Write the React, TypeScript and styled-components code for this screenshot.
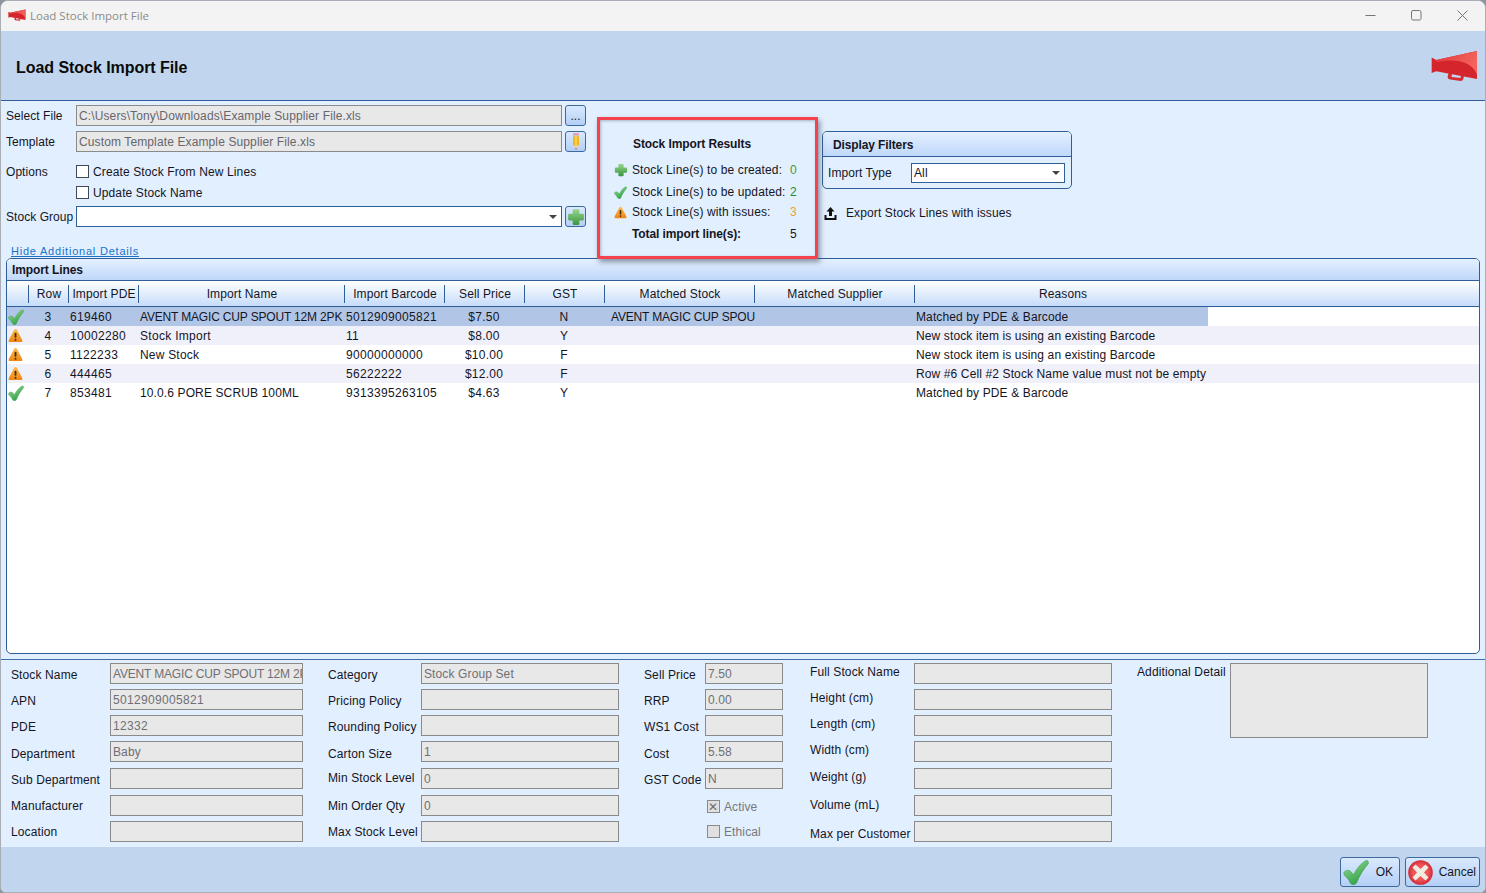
import React from 'react'
import styled, { createGlobalStyle } from 'styled-components'

const GlobalStyle = createGlobalStyle`
  html, body { margin: 0; padding: 0; background: #8e949c; }
  body { font-family: "Liberation Sans", Arial, sans-serif; font-size: 12px; letter-spacing: 0.12px; color: #15151f; }
  * { box-sizing: border-box; }
`

/* ---------- drawings ---------- */

function Megaphone({ width, height }: { width: number; height: number }) {
  return (
    <svg width={width} height={height} viewBox="424 150 142 96">
      <defs>
        <linearGradient id="hornShine" x1="0" y1="0" x2="1" y2="0.4">
          <stop offset="0" stopColor="#e2383c" />
          <stop offset="1" stopColor="#f4645c" />
        </linearGradient>
      </defs>
      <path d="M478 216 L474 232 Q474 238 482 239 L514 243 Q521 243 522 236 L524 226 L515 225 L513 234 L486 231 L488 218 Z" fill="#d42a30" />
      <path d="M426 172 L440 180 L563 153 L563 237 L440 214 L426 219 Z" fill="#d5252c" />
      <path d="M440 180 L563 153 L563 225 C552 190 510 172 440 186 Z" fill="url(#hornShine)" />
    </svg>
  )
}

function CheckIcon({ size = 16, id }: { size?: number; id: string }) {
  return (
    <svg width={size} height={size} viewBox="0 0 24 24">
      <defs>
        <linearGradient id={id} x1="0" y1="0" x2="0.6" y2="1">
          <stop offset="0" stopColor="#9ade98" />
          <stop offset="1" stopColor="#2f9e44" />
        </linearGradient>
      </defs>
      <path d="M0.8 12.5 C2.5 9.8 6 10 7.6 12 L9.6 14.6 C12.5 9 16.5 4 21 1.5 C23 1 24 2.5 23.2 4.5 C18.5 10 15 16 12.6 22 C11.5 24 8 24.3 6.8 22.3 C5.5 19 3 16.5 1 14.8 Z" fill={`url(#${id})`} stroke="#3a9a4a" strokeWidth="0.5" />
    </svg>
  )
}

function WarnIcon({ size = 15, id }: { size?: number; id: string }) {
  return (
    <svg width={size} height={size} viewBox="0 0 16 16">
      <defs>
        <linearGradient id={id} x1="0" y1="0" x2="0" y2="1">
          <stop offset="0" stopColor="#fbbf4e" />
          <stop offset="1" stopColor="#f08412" />
        </linearGradient>
      </defs>
      <path d="M8 1 Q9 1 9.6 2.2 L15.3 13 Q15.8 15 14 15 L2 15 Q0.2 15 0.7 13 L6.4 2.2 Q7 1 8 1 Z" fill={`url(#${id})`} />
      <rect x="7" y="5" width="2" height="5.5" rx="0.8" fill="#4a2c08" />
      <rect x="7" y="11.5" width="2" height="2" rx="0.8" fill="#4a2c08" />
    </svg>
  )
}

function PlusIcon({ size = 14, id }: { size?: number; id: string }) {
  return (
    <svg width={size} height={size} viewBox="0 0 16 16">
      <defs>
        <linearGradient id={id} x1="0" y1="0" x2="0" y2="1">
          <stop offset="0" stopColor="#98d68c" />
          <stop offset="1" stopColor="#3b9440" />
        </linearGradient>
      </defs>
      <path d="M6 1 H10 Q11 1 11 2 V5 H14 Q15 5 15 6 V10 Q15 11 14 11 H11 V14 Q11 15 10 15 H6 Q5 15 5 14 V11 H2 Q1 11 1 10 V6 Q1 5 2 5 H5 V2 Q5 1 6 1 Z" fill={`url(#${id})`} />
    </svg>
  )
}

function PencilIcon() {
  return (
    <svg width="8" height="17" viewBox="0 0 8 17">
      <rect x="1" y="0" width="6" height="2.5" fill="#e9a0a8" />
      <rect x="1" y="2.5" width="6" height="1" fill="#b9b9b9" />
      <rect x="1" y="3.5" width="6" height="9" fill="#f3b31c" />
      <rect x="3" y="3.5" width="2" height="9" fill="#f9d04a" />
      <path d="M1 12.5 H7 L4 16.5 Z" fill="#e8cfa4" />
      <path d="M3.2 15.4 H4.8 L4 16.8 Z" fill="#333" />
    </svg>
  )
}

function ExportIcon() {
  return (
    <svg width="13" height="13" viewBox="0 0 13 13">
      <path d="M6.5 0 L10.5 4.5 H8 V9 H5 V4.5 H2.5 Z" fill="#111" />
      <path d="M0.5 8 H2.5 V11 H10.5 V8 H12.5 V13 H0.5 Z" fill="#111" />
    </svg>
  )
}

function CancelIcon() {
  return (
    <svg width="25" height="25" viewBox="0 0 25 25">
      <defs>
        <radialGradient id="cancelRed" cx="0.5" cy="0.5" r="0.55">
          <stop offset="0.55" stopColor="#f0545a" />
          <stop offset="1" stopColor="#c9202c" />
        </radialGradient>
      </defs>
      <circle cx="12.5" cy="12.5" r="12.3" fill="url(#cancelRed)" />
      <path d="M7.5 4.5 L12.5 9 L17.5 4.5 L20.5 7.5 L16 12.5 L20.5 17.5 L17.5 20.5 L12.5 16 L7.5 20.5 L4.5 17.5 L9 12.5 L4.5 7.5 Z" fill="#f1ece2" />
    </svg>
  )
}

/* ---------- window chrome ---------- */

const Window = styled.div`
  width: 1486px;
  height: 893px;
  display: flex;
  flex-direction: column;
  border: 1px solid #a9aeb6;
  border-radius: 8px 8px 6px 6px;
  overflow: hidden;
  background: #e2effe;
`

const TitleBar = styled.div`
  height: 30px;
  flex: none;
  display: flex;
  align-items: center;
  padding: 0 0 2px 7px;
  background: #f3f3f3;
`

const TitleText = styled.span`
  margin-left: 4px;
  font-family: "Open Sans", sans-serif;
  font-size: 11.5px;
  letter-spacing: 0;
  color: #8b8b8b;
`

const WindowControls = styled.div`
  margin-left: auto;
  display: flex;
  align-items: center;
  padding-right: 17px;
  gap: 35px;
`

const Banner = styled.div`
  height: 70px;
  flex: none;
  display: flex;
  align-items: center;
  justify-content: space-between;
  padding: 5px 7px 0 15px;
  background: #c1d6ee;
  border-bottom: 1px solid #2f5f98;
`

const BannerTitle = styled.h1`
  margin: 0;
  font-size: 16px;
  font-weight: bold;
  letter-spacing: -0.05px;
  color: #0a0a0a;
`

const BannerLogo = styled.div`
  display: flex;
  margin-bottom: 5px;
`

/* ---------- top form ---------- */

const TopSection = styled.div`
  height: 157px;
  flex: none;
  display: flex;
  padding-left: 5px;
`

const FormColumn = styled.div`
  width: 580px;
  flex: none;
  padding-top: 4px;
`

const FormRow = styled.div<{ $top?: number }>`
  display: flex;
  align-items: center;
  height: 21px;
  margin-top: ${p => p.$top ?? 0}px;
`

const FormLabel = styled.label`
  width: 70px;
  flex: none;
  letter-spacing: 0.05px;
  white-space: nowrap;
`

const ReadOnlyInput = styled.div`
  width: 486px;
  height: 21px;
  flex: none;
  padding-left: 2px;
  line-height: 20px;
  color: #66666c;
  background: #e8e8e8;
  border: 1px solid #8a8a8a;
`

const ComboBox = styled.div<{ $width: number }>`
  width: ${p => p.$width}px;
  height: ${p => (p.$width > 200 ? 21 : 20)}px;
  flex: none;
  display: flex;
  align-items: center;
  justify-content: space-between;
  padding: 0 4px 0 2px;
  background: #fff;
  border: 1px solid #2f5f98;
`

const ComboArrow = styled.span`
  width: 0;
  height: 0;
  border-left: 4px solid transparent;
  border-right: 4px solid transparent;
  border-top: 4px solid #444;
`

const ToolButton = styled.button`
  width: 21px;
  height: 21px;
  flex: none;
  margin-left: 3px;
  padding: 0;
  display: flex;
  align-items: center;
  justify-content: center;
  font: 12px "Liberation Sans", Arial, sans-serif;
  color: #15151f;
  background: linear-gradient(#d9e9ff, #b4cff5);
  border: 1px solid #3a6a9e;
  border-radius: 3px;
`

const CheckBox = styled.span<{ $disabled?: boolean }>`
  width: 13px;
  height: 13px;
  flex: none;
  display: inline-flex;
  align-items: center;
  justify-content: center;
  font-size: 12px;
  line-height: 1;
  color: #6d6d6d;
  background: ${p => (p.$disabled ? '#e0e0e0' : '#fff')};
  border: 1px solid ${p => (p.$disabled ? '#8a8a8a' : '#3f4a58')};
`

const CheckLabel = styled.span<{ $disabled?: boolean }>`
  margin-left: 4px;
  color: ${p => (p.$disabled ? '#77777c' : 'inherit')};
`

const DetailsLink = styled.a`
  display: block;
  height: 13px;
  margin: 18px 0 0 5px;
  font-size: 11px;
  line-height: 13px;
  letter-spacing: 0.78px;
  color: #1a73c8;
  text-decoration: underline;
`

/* ---------- results box ---------- */

const ResultsBox = styled.div`
  position: relative;
  z-index: 2;
  width: 221px;
  height: 142px;
  flex: none;
  margin: 16px 0 0 11px;
  padding: 14px 0 0 14px;
  border: 3px solid #f4424f;
  background: #e2effe;
  box-shadow: 2px 3px 5px rgba(60, 70, 90, 0.55), inset 1px 1px 3px rgba(60, 70, 90, 0.35);
`

const ResultsTitle = styled.div`
  height: 20px;
  padding-left: 19px;
  line-height: 20px;
  font-weight: bold;
  letter-spacing: -0.1px;
`

const ResultRow = styled.div<{ $top: number; $bold?: boolean }>`
  display: grid;
  grid-template-columns: 13px 153px 10px;
  column-gap: 5px;
  align-items: center;
  height: 20px;
  margin-top: ${p => p.$top}px;
  font-weight: ${p => (p.$bold ? 'bold' : 'normal')};
  letter-spacing: ${p => (p.$bold ? '-0.1px' : '0.12px')};
  white-space: nowrap;
`

const ResultCount = styled.span<{ $color: string }>`
  color: ${p => p.$color};
  font-weight: normal;
`

/* ---------- filters ---------- */

const FilterColumn = styled.div`
  width: 250px;
  flex: none;
  margin: 30px 0 0 4px;
`

const FilterGroup = styled.div`
  height: 58px;
  border: 1px solid #2f5f98;
  border-radius: 5px;
  overflow: hidden;
`

const GroupHeader = styled.div`
  height: 25px;
  padding-left: 10px;
  line-height: 27px;
  font-weight: bold;
  letter-spacing: -0.12px;
  background: linear-gradient(#e4f0ff, #bfd8fb);
  border-bottom: 1px solid #2f5f98;
`

const FilterRow = styled.div`
  display: flex;
  align-items: center;
  height: 31px;
  padding: 0 0 0 5px;
`

const FilterLabel = styled.span`
  width: 83px;
  flex: none;
  letter-spacing: 0.05px;
`

const ExportRow = styled.div`
  display: flex;
  align-items: center;
  gap: 9px;
  height: 20px;
  margin: 14px 0 0 2px;
`

/* ---------- grid panel ---------- */

const GridPanel = styled.section`
  height: 396px;
  flex: none;
  margin: 0 5px;
  background: #fff;
  border: 1px solid #2f5f98;
  border-radius: 5px;
  overflow: hidden;
`

const PanelTitle = styled.div`
  height: 22px;
  padding-left: 5px;
  line-height: 23px;
  font-weight: bold;
  letter-spacing: -0.1px;
  background: linear-gradient(#e4f0ff, #bfd8fb);
  border-bottom: 1px solid #2f5f98;
`

const columns = '22px 40px 70px 206px 100px 80px 80px 150px 160px 296px 1fr'

const HeaderRow = styled.div`
  display: grid;
  grid-template-columns: ${columns};
  height: 26px;
  padding-top: 4px;
  background: linear-gradient(#ffffff, #c6dcfa);
  border-bottom: 1px solid #2f5f98;
`

const HeaderCell = styled.div<{ $divider?: boolean }>`
  height: 18px;
  line-height: 19px;
  text-align: center;
  white-space: nowrap;
  box-shadow: ${p => (p.$divider ? '-1px 0 0 #2f5f98' : 'none')};
`

const DataRow = styled.div<{ $kind: 'selected' | 'alt' | 'plain' }>`
  display: grid;
  grid-template-columns: ${columns};
  height: 19px;
  align-items: center;
  background: ${p =>
    p.$kind === 'selected'
      ? 'linear-gradient(90deg, #b1c6e6 1201px, #fff 1201px)'
      : p.$kind === 'alt'
        ? '#f0f0fb'
        : '#fff'};
`

const Cell = styled.div<{ $track?: number }>`
  padding-left: 1px;
  letter-spacing: ${p => p.$track ?? 0.12}px;
  white-space: nowrap;
  overflow: hidden;
`

const CenterCell = styled(Cell)`
  padding: 0 2px 0 0;
  text-align: center;
`

const StockCell = styled(Cell)`
  padding-left: 6px;
`

const IconCell = styled.div`
  height: 19px;
  display: flex;
  align-items: center;
  padding-left: 1px;
`

/* ---------- details ---------- */

const DetailsSection = styled.div`
  height: 188px;
  flex: none;
  margin-top: 5px;
  padding: 3px 0 0 10px;
  display: flex;
  border-top: 1px solid #3f6ea6;
`

const DetailColumn = styled.div<{ $label: number; $field: number; $gap: number }>`
  display: grid;
  grid-template-columns: ${p => p.$label}px ${p => p.$field}px;
  grid-template-rows: 26px 26px 26px 27px 27px 26px 21px;
  margin-right: ${p => p.$gap}px;
`

const DetailLabel = styled.div<{ $dy?: number }>`
  height: 21px;
  margin-top: ${p => p.$dy ?? 0}px;
  line-height: 21px;
  white-space: nowrap;
`

const DetailField = styled.div<{ $tall?: boolean; $track?: number }>`
  height: ${p => (p.$tall ? 75 : 21)}px;
  padding-left: 2px;
  line-height: 20px;
  letter-spacing: ${p => p.$track ?? 0.12}px;
  color: #6f6f74;
  background: #e8e8e8;
  border: 1px solid #8a8a8a;
  white-space: nowrap;
  overflow: hidden;
`

const DisabledCheck = styled.div<{ $dy?: number }>`
  grid-column: 2;
  display: flex;
  align-items: center;
  height: 21px;
  margin-top: ${p => p.$dy ?? 0}px;
  padding-left: 2px;
`

/* ---------- footer ---------- */

const Footer = styled.div`
  flex: 1;
  display: flex;
  justify-content: flex-end;
  align-items: flex-start;
  gap: 5px;
  padding: 10px 5px 0 0;
  background: #c1d6ee;
`

const ActionButton = styled.button<{ $width: number }>`
  width: ${p => p.$width}px;
  height: 30px;
  display: flex;
  align-items: center;
  justify-content: space-between;
  padding: 0 3px 0 2px;
  font: 12px "Liberation Sans", Arial, sans-serif;
  color: #15151f;
  background: linear-gradient(#d9e9ff, #b4cff5);
  border: 1px solid #3a6a9e;
  border-radius: 3px;
`

const OkLabel = styled.span`
  padding-right: 3px;
`

/* ---------- data ---------- */

type Status = 'ok' | 'warn'

const gridHeaders = ['', 'Row', 'Import PDE', 'Import Name', 'Import Barcode', 'Sell Price', 'GST', 'Matched Stock', 'Matched Supplier', 'Reasons']

const importLines: { status: Status; row: number; pde: string; name: string; nameTrack: number; barcode: string; price: string; gst: string; stock: string; reason: string }[] = [
  { status: 'ok', row: 3, pde: '619460', name: 'AVENT MAGIC CUP SPOUT 12M 2PK', nameTrack: -0.17, barcode: '5012909005821', price: '$7.50', gst: 'N', stock: 'AVENT MAGIC CUP SPOU', reason: 'Matched by PDE & Barcode' },
  { status: 'warn', row: 4, pde: '10002280', name: 'Stock Import', nameTrack: 0.3, barcode: '11', price: '$8.00', gst: 'Y', stock: '', reason: 'New stock item is using an existing Barcode' },
  { status: 'warn', row: 5, pde: '1122233', name: 'New Stock', nameTrack: 0.2, barcode: '90000000000', price: '$10.00', gst: 'F', stock: '', reason: 'New stock item is using an existing Barcode' },
  { status: 'warn', row: 6, pde: '444465', name: '', nameTrack: 0, barcode: '56222222', price: '$12.00', gst: 'F', stock: '', reason: 'Row #6 Cell #2 Stock Name value must not be empty' },
  { status: 'ok', row: 7, pde: '853481', name: '10.0.6 PORE SCRUB 100ML', nameTrack: 0.12, barcode: '9313395263105', price: '$4.63', gst: 'Y', stock: '', reason: 'Matched by PDE & Barcode' },
]

type DetailItem = { label: string; value?: string; dy?: number; track?: number }

const stockDetails: DetailItem[] = [
  { label: 'Stock Name', value: 'AVENT MAGIC CUP SPOUT 12M 2PK', dy: 2, track: -0.17 },
  { label: 'APN', value: '5012909005821', dy: 2, track: 0.33 },
  { label: 'PDE', value: '12332', dy: 2, track: 0.33 },
  { label: 'Department', value: 'Baby', dy: 3 },
  { label: 'Sub Department', dy: 2 },
  { label: 'Manufacturer', dy: 1 },
  { label: 'Location', dy: 1 },
]

const policyDetails: DetailItem[] = [
  { label: 'Category', value: 'Stock Group Set', dy: 2 },
  { label: 'Pricing Policy', dy: 2 },
  { label: 'Rounding Policy', dy: 2 },
  { label: 'Carton Size', value: '1', dy: 3 },
  { label: 'Min Stock Level', value: '0' },
  { label: 'Min Order Qty', value: '0', dy: 1 },
  { label: 'Max Stock Level', dy: 1 },
]

const priceDetails: DetailItem[] = [
  { label: 'Sell Price', value: '7.50', dy: 2 },
  { label: 'RRP', value: '0.00', dy: 2 },
  { label: 'WS1 Cost', dy: 2 },
  { label: 'Cost', value: '5.58', dy: 3 },
  { label: 'GST Code', value: 'N', dy: 2 },
]

const sizeDetails: DetailItem[] = [
  { label: 'Full Stock Name', dy: -1 },
  { label: 'Height (cm)', dy: -1 },
  { label: 'Length (cm)', dy: -1 },
  { label: 'Width (cm)', dy: -1 },
  { label: 'Weight (g)', dy: -1 },
  { label: 'Volume (mL)' },
  { label: 'Max per Customer', dy: 3 },
]

function DetailRows({ items }: { items: DetailItem[] }) {
  return (
    <>
      {items.map(item => (
        <React.Fragment key={item.label}>
          <DetailLabel $dy={item.dy}>{item.label}</DetailLabel>
          <DetailField $track={item.track}>{item.value}</DetailField>
        </React.Fragment>
      ))}
    </>
  )
}

export default function App() {
  return (
    <>
      <GlobalStyle />
      <Window>
        <TitleBar>
          <Megaphone width={18} height={12} />
          <TitleText>Load Stock Import File</TitleText>
          <WindowControls>
            <svg width="11" height="11" viewBox="0 0 11 11"><path d="M0.5 5.5 H10.5" stroke="#777" /></svg>
            <svg width="11" height="11" viewBox="0 0 11 11"><rect x="0.5" y="0.5" width="9.5" height="9.5" rx="1.5" fill="none" stroke="#777" /></svg>
            <svg width="11" height="11" viewBox="0 0 11 11"><path d="M0.5 0.5 L10.5 10.5 M10.5 0.5 L0.5 10.5" stroke="#777" /></svg>
          </WindowControls>
        </TitleBar>

        <Banner>
          <BannerTitle>Load Stock Import File</BannerTitle>
          <BannerLogo><Megaphone width={47} height={32} /></BannerLogo>
        </Banner>

        <TopSection>
          <FormColumn>
            <FormRow>
              <FormLabel>Select File</FormLabel>
              <ReadOnlyInput>C:\Users\Tony\Downloads\Example Supplier File.xls</ReadOnlyInput>
              <ToolButton>...</ToolButton>
            </FormRow>
            <FormRow $top={5}>
              <FormLabel>Template</FormLabel>
              <ReadOnlyInput>Custom Template Example Supplier File.xls</ReadOnlyInput>
              <ToolButton><PencilIcon /></ToolButton>
            </FormRow>
            <FormRow $top={9}>
              <FormLabel>Options</FormLabel>
              <CheckBox />
              <CheckLabel>Create Stock From New Lines</CheckLabel>
            </FormRow>
            <FormRow>
              <FormLabel />
              <CheckBox />
              <CheckLabel>Update Stock Name</CheckLabel>
            </FormRow>
            <FormRow $top={3}>
              <FormLabel>Stock Group</FormLabel>
              <ComboBox $width={486}><span /><ComboArrow /></ComboBox>
              <ToolButton><PlusIcon size={18} id="plusGroup" /></ToolButton>
            </FormRow>
            <DetailsLink>Hide Additional Details</DetailsLink>
          </FormColumn>

          <ResultsBox>
            <ResultsTitle>Stock Import Results</ResultsTitle>
            <ResultRow $top={6}>
              <PlusIcon id="plusResult" />
              <span>Stock Line(s) to be created:</span>
              <ResultCount $color="#3d9a3d">0</ResultCount>
            </ResultRow>
            <ResultRow $top={2}>
              <CheckIcon size={13} id="checkResult" />
              <span>Stock Line(s) to be updated:</span>
              <ResultCount $color="#1c8a3a">2</ResultCount>
            </ResultRow>
            <ResultRow $top={0}>
              <WarnIcon size={13} id="warnResult" />
              <span>Stock Line(s) with issues:</span>
              <ResultCount $color="#f0a030">3</ResultCount>
            </ResultRow>
            <ResultRow $top={2} $bold>
              <span />
              <span>Total import line(s):</span>
              <ResultCount $color="#15151f">5</ResultCount>
            </ResultRow>
          </ResultsBox>

          <FilterColumn>
            <FilterGroup>
              <GroupHeader>Display Filters</GroupHeader>
              <FilterRow>
                <FilterLabel>Import Type</FilterLabel>
                <ComboBox $width={154}>All<ComboArrow /></ComboBox>
              </FilterRow>
            </FilterGroup>
            <ExportRow>
              <ExportIcon />
              <span>Export Stock Lines with issues</span>
            </ExportRow>
          </FilterColumn>
        </TopSection>

        <GridPanel>
          <PanelTitle>Import Lines</PanelTitle>
          <HeaderRow>
            {gridHeaders.map((title, i) => (
              <HeaderCell key={title || 'status'} $divider={i > 0}>{title}</HeaderCell>
            ))}
          </HeaderRow>
          {importLines.map((line, i) => (
            <DataRow key={line.row} $kind={i === 0 ? 'selected' : i % 2 === 1 ? 'alt' : 'plain'}>
              <IconCell>
                {line.status === 'ok'
                  ? <CheckIcon id={`rowCheck${line.row}`} />
                  : <WarnIcon id={`rowWarn${line.row}`} />}
              </IconCell>
              <CenterCell>{line.row}</CenterCell>
              <Cell $track={0.33}>{line.pde}</Cell>
              <Cell $track={line.nameTrack}>{line.name}</Cell>
              <Cell $track={0.33}>{line.barcode}</Cell>
              <CenterCell $track={0.25}>{line.price}</CenterCell>
              <CenterCell>{line.gst}</CenterCell>
              <StockCell $track={-0.17}>{line.stock}</StockCell>
              <Cell />
              <Cell>{line.reason}</Cell>
            </DataRow>
          ))}
        </GridPanel>

        <DetailsSection>
          <DetailColumn $label={99} $field={193} $gap={25}>
            <DetailRows items={stockDetails} />
          </DetailColumn>
          <DetailColumn $label={93} $field={198} $gap={25}>
            <DetailRows items={policyDetails} />
          </DetailColumn>
          <DetailColumn $label={61} $field={78} $gap={27}>
            <DetailRows items={priceDetails} />
            <DisabledCheck $dy={1}>
              <CheckBox $disabled>✕</CheckBox>
              <CheckLabel $disabled>Active</CheckLabel>
            </DisabledCheck>
            <DisabledCheck>
              <CheckBox $disabled />
              <CheckLabel $disabled>Ethical</CheckLabel>
            </DisabledCheck>
          </DetailColumn>
          <DetailColumn $label={104} $field={198} $gap={25}>
            <DetailRows items={sizeDetails} />
          </DetailColumn>
          <DetailColumn $label={93} $field={198} $gap={0}>
            <DetailLabel $dy={-1}>Additional Detail</DetailLabel>
            <DetailField $tall />
          </DetailColumn>
        </DetailsSection>

        <Footer>
          <ActionButton $width={60}>
            <CheckIcon size={26} id="okCheck" />
            <OkLabel>OK</OkLabel>
          </ActionButton>
          <ActionButton $width={75}>
            <CancelIcon />
            <span>Cancel</span>
          </ActionButton>
        </Footer>
      </Window>
    </>
  )
}
